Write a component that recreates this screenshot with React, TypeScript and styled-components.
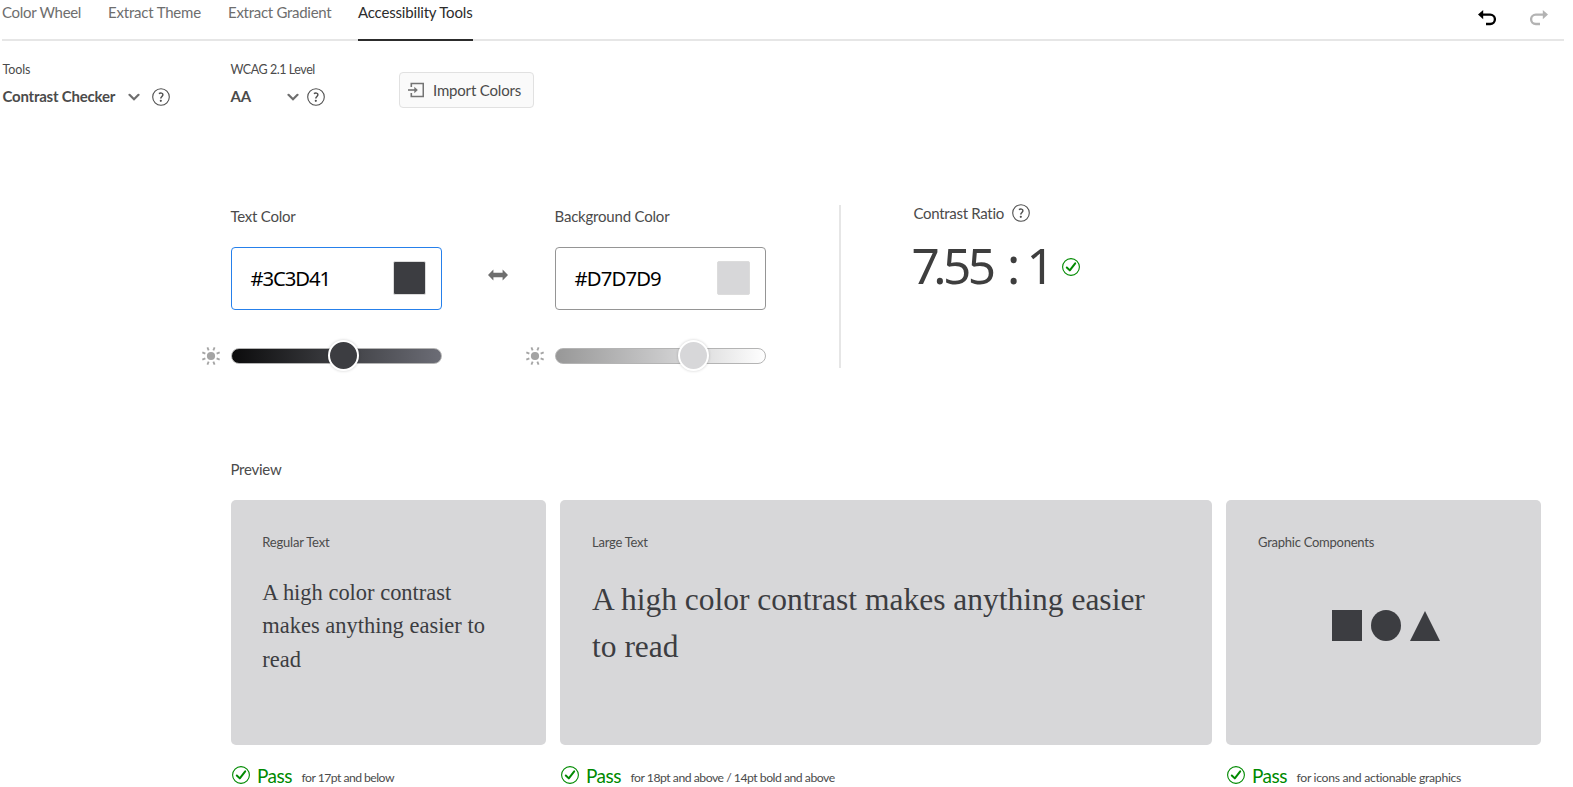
import React from 'react';
import styled, { createGlobalStyle } from 'styled-components';

const TEXT_COLOR = '#3C3D41';
const BACKGROUND_COLOR = '#D7D7D9';

const GlobalStyle = createGlobalStyle`
  *, *::before, *::after { box-sizing: border-box; }
  body {
    margin: 0;
    background: #fff;
    color: #4b4b4b;
    font-family: Lato, "Noto Sans", sans-serif;
    font-size: 15px;
    line-height: 20px;
    overflow: hidden;
  }
`;

const Page = styled.div`
  width: 1573px;
  height: 787px;
  padding-top: 2px;
  overflow: hidden;
`;

const Header = styled.header`
  display: flex;
  justify-content: space-between;
  height: 39px;
  margin: 0 9px 0 2px;
  border-bottom: 2px solid #e6e6e6;
`;

const Tabs = styled.nav`
  display: flex;
  gap: 26.5px;
`;

const Tab = styled.a<{ $width: number; $track: number; $active?: boolean }>`
  width: ${(p) => p.$width}px;
  height: 39px;
  letter-spacing: ${(p) => p.$track}px;
  white-space: nowrap;
  color: ${(p) => (p.$active ? '#2c2c2c' : '#6e6e6e')};
  border-bottom: 2px solid ${(p) => (p.$active ? '#2c2c2c' : 'transparent')};
`;

const History = styled.div`
  display: flex;
  gap: 34px;
  padding: 8px 16px 0 0;
`;

const Toolbar = styled.div`
  display: grid;
  grid-template-columns: 228px 168.5px 135px;
  margin: 20px 0 0 2.5px;
  height: 47px;
`;

const Setting = styled.div`
  display: flex;
  flex-direction: column;
  gap: 8px;
  padding-top: 1px;
`;

const SettingLabel = styled.span<{ $track: number }>`
  font-size: 12.5px;
  line-height: 16px;
  letter-spacing: ${(p) => p.$track}px;
`;

const SettingValue = styled.div`
  display: flex;
  align-items: center;
  height: 21px;
`;

const ValueText = styled.span<{ $width: number }>`
  width: ${(p) => p.$width}px;
  padding-bottom: 1px;
  font-weight: 700;
  letter-spacing: -0.22px;
  white-space: nowrap;
`;

const IconGap = styled.span<{ $width: number }>`
  width: ${(p) => p.$width}px;
`;

const ImportButton = styled.button`
  display: flex;
  align-items: center;
  gap: 9px;
  width: 135px;
  height: 36px;
  margin: 11px 0 0;
  padding: 0 0 1px 8px;
  border: 1px solid #e1e1e1;
  border-radius: 4px;
  background: #fafafa;
  color: #4b4b4b;
  font: inherit;
  letter-spacing: -0.18px;
  white-space: nowrap;
`;

const Editor = styled.section`
  display: flex;
  height: 163px;
  margin: 97px 0 0 202px;
`;

const Field = styled.div`
  width: 240px;
  padding: 1px 0 0 29px;
`;

const FieldLabel = styled.div<{ $track?: number }>`
  margin-left: -0.5px;
  letter-spacing: ${(p) => p.$track ?? -0.25}px;
`;

const ColorInput = styled.div<{ $focused?: boolean }>`
  display: flex;
  align-items: center;
  justify-content: space-between;
  height: 63px;
  margin-top: 21px;
  padding: 0 15px 1px 18px;
  border: 1px solid ${(p) => (p.$focused ? '#2680eb' : '#959595')};
  border-radius: 4px;
`;

const HexValue = styled.span<{ $track: number }>`
  font-family: "Noto Sans", sans-serif;
  font-size: 20.3px;
  letter-spacing: ${(p) => p.$track}px;
  margin-left: 0.5px;
  color: #000;
`;

const Swatch = styled.span<{ $color: string }>`
  width: 33px;
  height: 34px;
  border: 1px solid #dcdcdc;
  border-radius: 2px;
  background: ${(p) => p.$color};
`;

const SliderRow = styled.div`
  display: flex;
  align-items: center;
  gap: 11px;
  height: 32px;
  margin: 30px 0 0 -29px;
`;

const Track = styled.div<{ $from: string; $mid: string; $to: string }>`
  position: relative;
  width: 211px;
  height: 16px;
  border: 1px solid #b4b4b4;
  border-radius: 8px;
  background: linear-gradient(to right, ${(p) => p.$from}, ${(p) => p.$mid}, ${(p) => p.$to}) border-box;
`;

const Thumb = styled.span<{ $at: number; $color: string }>`
  position: absolute;
  top: -9px;
  left: ${(p) => p.$at}px;
  width: 31px;
  height: 31px;
  border: 2px solid #fff;
  border-radius: 50%;
  background: ${(p) => p.$color};
  box-shadow: 0 0 3px rgba(0, 0, 0, 0.2);
`;

const SwapButton = styled.div`
  display: flex;
  width: 20px;
  margin: 64px 18px 0 46px;
`;

const Divider = styled.div`
  width: 2px;
  height: 163px;
  margin: 0 72.5px 0 73px;
  background: #e6e6e6;
`;

const RatioLabel = styled.div`
  display: flex;
  align-items: center;
  gap: 8px;
  height: 18px;
  margin-top: -1px;
  letter-spacing: -0.3px;
`;

const RatioRow = styled.div`
  display: flex;
  align-items: center;
  margin-top: 12.5px;
`;

const RatioValue = styled.div`
  width: 150.5px;
  margin: 0 0 -4px -2px;
  padding-bottom: 4px;
  font-family: "Noto Sans", sans-serif;
  font-size: 49.5px;
  line-height: 60px;
  letter-spacing: -3.2px;
  white-space: pre;
  color: #3e3e3e;
`;

const Kerned = styled.span<{ $track: number }>`
  letter-spacing: ${(p) => p.$track}px;
`;

const RatioStatus = styled.span`
  display: flex;
  padding-top: 4px;
`;

const Preview = styled.section`
  margin: 91px 0 0 231px;
`;

const CardGrid = styled.div`
  display: grid;
  grid-template-columns: 315px 652px 315px;
  column-gap: 14px;
  margin-top: 21px;
`;

const Card = styled.div<{ $inset?: number }>`
  height: 245px;
  padding: 34px 52px 0 ${(p) => p.$inset ?? 32}px;
  border-radius: 5px;
  background: ${BACKGROUND_COLOR};
`;

const CardLabel = styled.div<{ $track: number }>`
  font-size: 13px;
  line-height: 16px;
  letter-spacing: ${(p) => p.$track}px;
`;

const Sample = styled.p<{ $size: number; $line: number }>`
  margin: 26px 0 0;
  font-family: "Liberation Serif", serif;
  font-size: ${(p) => p.$size}px;
  line-height: ${(p) => p.$line}px;
  color: ${TEXT_COLOR};
`;

const Shapes = styled.div`
  margin: 60px 0 0 74px;
  line-height: 0;
`;

const Result = styled.div`
  display: flex;
  height: 24px;
  margin-top: 19px;
`;

const ResultIcon = styled.span`
  display: flex;
  width: 26px;
  padding: 2px 0 0 1px;
`;

const Verdict = styled.span`
  width: 44.5px;
  font-size: 19px;
  line-height: 22px;
  letter-spacing: -0.5px;
  padding-top: 1px;
  color: #008a00;
`;

const Note = styled.span<{ $track: number }>`
  font-size: 12.2px;
  line-height: 16px;
  padding-top: 6px;
  letter-spacing: ${(p) => p.$track}px;
  white-space: nowrap;
`;

const UndoIcon = ({ flip, color }: { flip?: boolean; color: string }) => (
  <svg width="18" height="18" viewBox="0 0 18 18">
    <g transform={flip ? 'translate(18 0) scale(-1 1)' : undefined}>
      <path d="M0 4.6 5.2 0v9.2z" fill={color} />
      <path d="M4 4.6h8.2a4.6 4.6 0 0 1 0 9.4H8" fill="none" stroke={color} strokeWidth="2.3" />
    </g>
  </svg>
);

const Chevron = () => (
  <svg width="12" height="8" viewBox="0 0 12 8">
    <path d="M1.5 1.8 6 6.2l4.5-4.4" fill="none" stroke="#6e6e6e" strokeWidth="2.2" strokeLinecap="round" />
  </svg>
);

const HelpIcon = () => (
  <svg width="18" height="18" viewBox="0 0 18 18">
    <circle cx="9" cy="9" r="8.3" fill="none" stroke="#505050" strokeWidth="1.1" />
    <path d="M6.9 5.6c1.6-1 4-.7 4 1.2 0 1.6-2.1 1.8-2.1 3.7" fill="none" stroke="#505050" strokeWidth="1.5" />
    <circle cx="8.8" cy="12.8" r="1.1" fill="#505050" />
  </svg>
);

const ImportIcon = () => (
  <svg width="16" height="16" viewBox="0 0 16 16" fill="none" stroke="#747474" strokeWidth="1.6">
    <path d="M3.3 5V1.5h12v13h-12V11" />
    <path d="M0 8h8" />
    <path d="M6.3 4.8 9.8 8l-3.5 3.2z" fill="#747474" stroke="none" />
  </svg>
);

const SunIcon = () => (
  <svg width="18" height="18" viewBox="0 0 18 18" overflow="visible">
    <circle cx="9" cy="9" r="4.1" fill="#a4a4a4" />
    {[22.5, 67.5, 112.5, 157.5, 202.5, 247.5, 292.5, 337.5].map((angle) => (
      <path key={angle} d="M9 -.4v3.3" stroke="#a4a4a4" strokeWidth="1.8" transform={`rotate(${angle} 9 9)`} />
    ))}
  </svg>
);

const SwapIcon = () => (
  <svg width="20" height="12" viewBox="0 0 20 12">
    <path d="M0 6 5.4.6v3.1h9.2V.6L20 6l-5.4 5.4V8.3H5.4v3.1z" fill="#6e6e6e" />
  </svg>
);

const CheckIcon = () => (
  <svg width="18" height="18" viewBox="0 0 18 18" fill="none" stroke="#008a00">
    <circle cx="9" cy="9" r="8.4" strokeWidth="1.1" />
    <path d="M4.8 9.5 7.8 12.4 13.2 5.4" strokeWidth="2" strokeLinecap="round" strokeLinejoin="round" />
  </svg>
);

const PassResult = ({ note, track }: { note: string; track: number }) => (
  <Result>
    <ResultIcon><CheckIcon /></ResultIcon>
    <Verdict>Pass</Verdict>
    <Note $track={track}>{note}</Note>
  </Result>
);

export default function App() {
  return (
    <Page>
      <GlobalStyle />
      <Header>
        <Tabs>
          <Tab $width={79.5} $track={-0.3}>Color Wheel</Tab>
          <Tab $width={93.5} $track={-0.2}>Extract Theme</Tab>
          <Tab $width={103.5} $track={-0.28}>Extract Gradient</Tab>
          <Tab $width={114.5} $track={-0.18} $active>Accessibility Tools</Tab>
        </Tabs>
        <History>
          <UndoIcon color="#000" />
          <UndoIcon color="#b3b3b3" flip />
        </History>
      </Header>

      <Toolbar>
        <Setting>
          <SettingLabel $track={-0.1}>Tools</SettingLabel>
          <SettingValue>
            <ValueText $width={125}>Contrast Checker</ValueText>
            <Chevron />
            <IconGap $width={12.5} />
            <HelpIcon />
          </SettingValue>
        </Setting>
        <Setting>
          <SettingLabel $track={-0.45}>WCAG 2.1 Level</SettingLabel>
          <SettingValue>
            <ValueText $width={56}>AA</ValueText>
            <Chevron />
            <IconGap $width={8} />
            <HelpIcon />
          </SettingValue>
        </Setting>
        <ImportButton><ImportIcon />Import Colors</ImportButton>
      </Toolbar>

      <Editor>
        <Field>
          <FieldLabel>Text Color</FieldLabel>
          <ColorInput $focused>
            <HexValue $track={-1.1}>#3C3D41</HexValue>
            <Swatch $color={TEXT_COLOR} />
          </ColorInput>
          <SliderRow>
            <SunIcon />
            <Track $from="#0b0b0c" $mid="#3c3d41" $to="#6c6d76">
              <Thumb $at={96} $color={TEXT_COLOR} />
            </Track>
          </SliderRow>
        </Field>
        <SwapButton><SwapIcon /></SwapButton>
        <Field>
          <FieldLabel $track={-0.2}>Background Color</FieldLabel>
          <ColorInput>
            <HexValue $track={-0.85}>#D7D7D9</HexValue>
            <Swatch $color={BACKGROUND_COLOR} />
          </ColorInput>
          <SliderRow>
            <SunIcon />
            <Track $from="#979797" $mid="#c8c8c9" $to="#ffffff">
              <Thumb $at={122} $color={BACKGROUND_COLOR} />
            </Track>
          </SliderRow>
        </Field>
        <Divider />
        <div>
          <RatioLabel>Contrast Ratio<HelpIcon /></RatioLabel>
          <RatioRow>
            <RatioValue><Kerned $track={-6.5}>7</Kerned><Kerned $track={-3.6}>.5</Kerned><Kerned $track={1.3}>5</Kerned> <Kerned $track={-3.3}>: 1</Kerned></RatioValue>
            <RatioStatus><CheckIcon /></RatioStatus>
          </RatioRow>
        </div>
      </Editor>

      <Preview>
        <FieldLabel>Preview</FieldLabel>
        <CardGrid>
          <div>
            <Card $inset={31.3}>
              <CardLabel $track={-0.2}>Regular Text</CardLabel>
              <Sample $size={22.46} $line={33.4}>A high color contrast makes anything easier to read</Sample>
            </Card>
            <PassResult note="for 17pt and below" track={-0.53} />
          </div>
          <div>
            <Card>
              <CardLabel $track={-0.25}>Large Text</CardLabel>
              <Sample $size={31.5} $line={47}>A high color contrast makes anything easier to read</Sample>
            </Card>
            <PassResult note="for 18pt and above / 14pt bold and above" track={-0.48} />
          </div>
          <div>
            <Card>
              <CardLabel $track={-0.25}>Graphic Components</CardLabel>
              <Shapes>
                <svg width="108" height="31" viewBox="0 0 108 31" fill={TEXT_COLOR}>
                  <rect width="30" height="31" />
                  <ellipse cx="54" cy="15.5" rx="15" ry="15.5" />
                  <path d="M93 1 108 31H78z" />
                </svg>
              </Shapes>
            </Card>
            <PassResult note="for icons and actionable graphics" track={-0.3} />
          </div>
        </CardGrid>
      </Preview>
    </Page>
  );
}
